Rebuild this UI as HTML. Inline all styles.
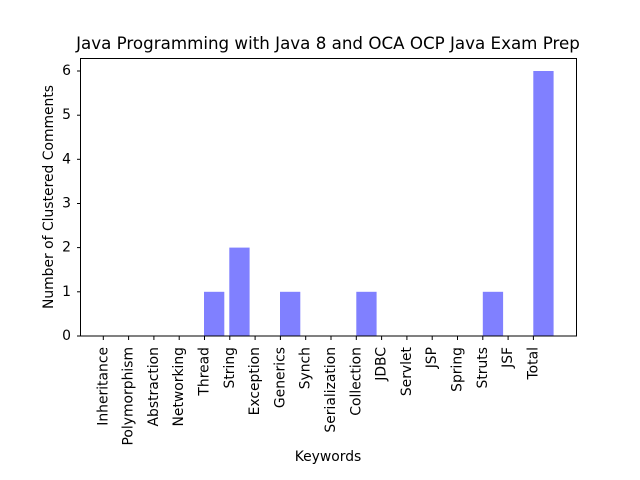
<!DOCTYPE html>
<html><head><style>html,body{margin:0;padding:0;background:#fff;}svg{display:block;}</style></head>
<body>
<svg width="640" height="480" xmlns="http://www.w3.org/2000/svg" font-family="DejaVu Sans, sans-serif" fill="#000">
<rect width="640" height="480" fill="#fff"/>
<g fill="#8080ff">
<rect x="204" y="291.8" width="20.3" height="44.2"/>
<rect x="229.3" y="247.6" width="20.3" height="88.4"/>
<rect x="280" y="291.8" width="20.3" height="44.2"/>
<rect x="356.3" y="291.8" width="20.3" height="44.2"/>
<rect x="482.8" y="291.8" width="20.3" height="44.2"/>
<rect x="533.3" y="71" width="20.3" height="265"/>
</g>
<rect x="80.5" y="58.5" width="496" height="277.5" fill="none" stroke="#000" stroke-width="1"/>
<g stroke="#000" stroke-width="1">
<line x1="77" y1="336" x2="80.5" y2="336"/><line x1="77" y1="291.8" x2="80.5" y2="291.8"/><line x1="77" y1="247.6" x2="80.5" y2="247.6"/><line x1="77" y1="203.5" x2="80.5" y2="203.5"/><line x1="77" y1="159.3" x2="80.5" y2="159.3"/><line x1="77" y1="115.2" x2="80.5" y2="115.2"/><line x1="77" y1="71" x2="80.5" y2="71"/>
</g>
<g font-size="13.9" text-anchor="end" dominant-baseline="central">
<text x="71" y="336">0</text><text x="71" y="291.8">1</text><text x="71" y="247.6">2</text><text x="71" y="203.5">3</text><text x="71" y="159.3">4</text><text x="71" y="115.2">5</text><text x="71" y="71">6</text>
</g>
<g font-size="13.9" text-anchor="end" dominant-baseline="central">
<text transform="translate(103.3,347) rotate(-90)">Inheritance</text>
<text transform="translate(128.6,347) rotate(-90)">Polymorphism</text>
<text transform="translate(153.9,347) rotate(-90)">Abstraction</text>
<text transform="translate(179.2,347) rotate(-90)">Networking</text>
<text transform="translate(204.5,347) rotate(-90)">Thread</text>
<text transform="translate(229.8,347) rotate(-90)">String</text>
<text transform="translate(255.1,347) rotate(-90)">Exception</text>
<text transform="translate(280.4,347) rotate(-90)">Generics</text>
<text transform="translate(305.7,347) rotate(-90)">Synch</text>
<text transform="translate(331,347) rotate(-90)">Serialization</text>
<text transform="translate(356.3,347) rotate(-90)">Collection</text>
<text transform="translate(381.6,347) rotate(-90)">JDBC</text>
<text transform="translate(406.9,347) rotate(-90)">Servlet</text>
<text transform="translate(432.2,347) rotate(-90)">JSP</text>
<text transform="translate(457.5,347) rotate(-90)">Spring</text>
<text transform="translate(482.8,347) rotate(-90)">Struts</text>
<text transform="translate(508.1,347) rotate(-90)">JSF</text>
<text transform="translate(533.4,347) rotate(-90)">Total</text>
</g>
<g stroke="#000" stroke-width="1">
<line x1="103.3" y1="336" x2="103.3" y2="340"/><line x1="128.6" y1="336" x2="128.6" y2="340"/><line x1="153.9" y1="336" x2="153.9" y2="340"/><line x1="179.2" y1="336" x2="179.2" y2="340"/><line x1="204.5" y1="336" x2="204.5" y2="340"/><line x1="229.8" y1="336" x2="229.8" y2="340"/><line x1="255.1" y1="336" x2="255.1" y2="340"/><line x1="280.4" y1="336" x2="280.4" y2="340"/><line x1="305.7" y1="336" x2="305.7" y2="340"/><line x1="331" y1="336" x2="331" y2="340"/><line x1="356.3" y1="336" x2="356.3" y2="340"/><line x1="381.6" y1="336" x2="381.6" y2="340"/><line x1="406.9" y1="336" x2="406.9" y2="340"/><line x1="432.2" y1="336" x2="432.2" y2="340"/><line x1="457.5" y1="336" x2="457.5" y2="340"/><line x1="482.8" y1="336" x2="482.8" y2="340"/><line x1="508.1" y1="336" x2="508.1" y2="340"/><line x1="533.4" y1="336" x2="533.4" y2="340"/>
</g>
<text x="328" y="461" font-size="13.9" text-anchor="middle">Keywords</text>
<text transform="translate(53,197) rotate(-90)" font-size="13.9" text-anchor="middle">Number of Clustered Comments</text>
<text x="328" y="49" font-size="16.7" text-anchor="middle">Java Programming with Java 8 and OCA OCP Java Exam Prep</text>
</svg>
</body></html>
